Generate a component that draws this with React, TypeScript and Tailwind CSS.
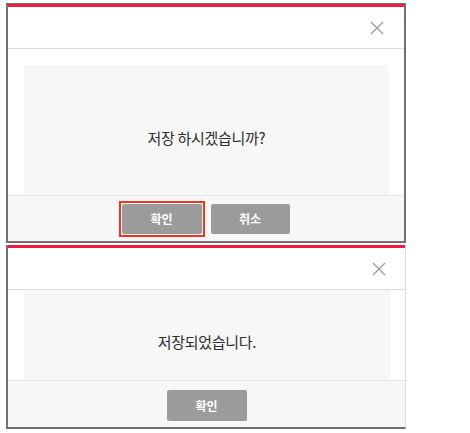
import React from "react";

function CloseX() {
  return (
    <svg width="14" height="14" viewBox="0 0 14 14" fill="none">
      <path d="M1 1L13 13M13 1L1 13" stroke="#9a9a9a" strokeWidth="1.3" />
    </svg>
  );
}

export default function App() {
  const font = { fontFamily: '"Noto Sans CJK KR", "Noto Sans", sans-serif' };
  return (
    <div className="w-[470px] h-[433px] bg-white pl-[6px] pt-[3px]" style={font}>
      {/* Dialog 1 */}
      <div className="w-[400px] border-x-2 border-b-2 border-t border-[#707070] bg-white flex flex-col">
        <div className="h-[3px] bg-[#ee1c3f]" />
        <div className="h-[42px] border-b border-[#dddddd] flex items-center justify-end pr-[20px]">
          <CloseX />
        </div>
        <div className="pt-[16px] pl-[16px] pr-[15px]">
          <div className="h-[130px] bg-[#f7f7f7] flex items-center justify-center pt-[16px] text-[15px] text-[#2e2e2e] tracking-[-0.3px]">
            저장 하시겠습니까?
          </div>
        </div>
        <div className="h-[46px] bg-[#f7f7f7] border-t border-[#e6e6e6] flex items-center justify-center gap-[6px] pr-[4px]">
          <div className="border-2 border-[#f2331f] p-[1px] bg-white">
            <button className="block w-[80px] h-[30px] rounded-[2px] bg-[#9b9b9b] text-white text-[12px] font-bold">
              확인
            </button>
          </div>
          <button className="w-[79px] h-[30px] rounded-[2px] bg-[#9b9b9b] text-white text-[12px] font-bold">
            취소
          </button>
        </div>
      </div>
      {/* Dialog 2 */}
      <div className="mt-[2px] w-[400px] border-l-2 border-b-2 border-r border-l-[#707070] border-b-[#707070] border-r-[#dddddd] bg-white flex flex-col">
        <div className="h-[3px] bg-[#ee1c3f]" />
        <div className="h-[42px] border-b border-[#dddddd] flex items-center justify-end pr-[19px]">
          <CloseX />
        </div>
        <div className="pl-[16px] pr-[15px]">
          <div className="h-[90px] bg-[#f7f7f7] flex items-center justify-center pt-[14px] text-[15px] text-[#2e2e2e] tracking-[-0.3px]">
            저장되었습니다.
          </div>
        </div>
        <div className="h-[47px] bg-[#f7f7f7] border-t border-[#e6e6e6] flex items-start justify-center pt-[9px]">
          <button className="w-[80px] h-[31px] rounded-[2px] bg-[#9b9b9b] text-white text-[12px] font-bold">
            확인
          </button>
        </div>
      </div>
    </div>
  );
}
